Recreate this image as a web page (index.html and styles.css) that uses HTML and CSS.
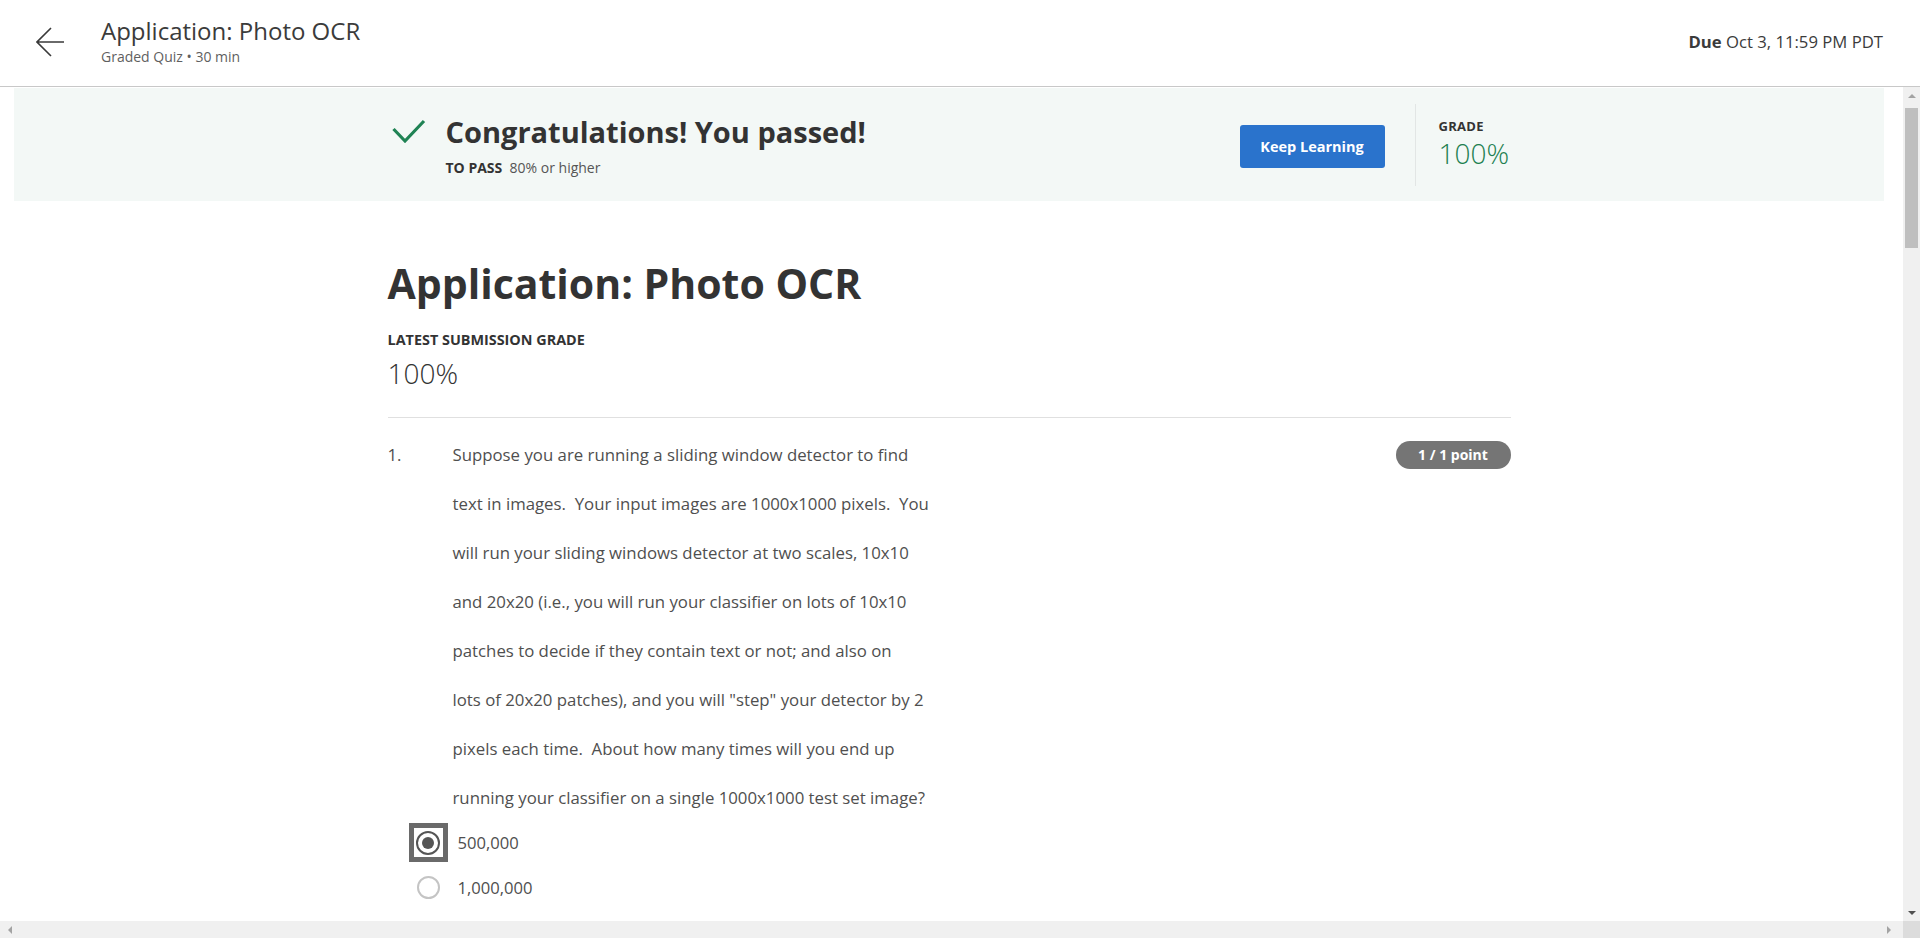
FILE: index.html
```html
<!DOCTYPE html>
<html lang="en">
<head>
<meta charset="utf-8">
<title>Application: Photo OCR</title>
<link rel="stylesheet" href="styles.css">
</head>
<body>
<header class="topbar">
  <a class="back" aria-label="Back">
    <svg width="28" height="30" viewBox="0 0 28 30"><path d="M28 15H1M15 1L1 15L15 29" fill="none" stroke="#3a3a3a" stroke-width="1.6"/></svg>
  </a>
  <div class="titles">
    <div class="t1">Application: Photo OCR</div>
    <div class="t2">Graded Quiz • 30 min</div>
  </div>
  <div class="due"><b>Due</b> Oct 3, 11:59 PM PDT</div>
</header>
<div class="viewport">
  <main class="scroll">
    <div class="page">
      <section class="banner">
        <div class="wrap banner-row">
          <div class="pass">
            <svg class="check" width="34" height="26" viewBox="0 0 34 26"><path d="M1.5 10L13 22L32 2" fill="none" stroke="#1f8354" stroke-width="3.2"/></svg>
            <div class="pass-text">
              <h2 class="congrats">Congratulations! You passed!</h2>
              <div class="topass"><b>TO PASS</b>&nbsp; 80% or higher</div>
            </div>
          </div>
          <button class="btn">Keep Learning</button>
          <div class="vdiv"></div>
          <div class="grade">
            <div class="label">GRADE</div>
            <div class="grade-val">100%</div>
          </div>
        </div>
      </section>
      <div class="wrap content">
        <h1 class="title">Application: Photo OCR</h1>
        <div class="latest">LATEST SUBMISSION GRADE</div>
        <div class="score">100%</div>
        <hr class="divider">
        <div class="question">
          <div class="qnum">1.</div>
          <div class="qtext">
            <div class="line">Suppose you are running a sliding window detector to find</div>
            <div class="line">text in images.  Your input images are 1000x1000 pixels.  You</div>
            <div class="line">will run your sliding windows detector at two scales, 10x10</div>
            <div class="line">and 20x20 (i.e., you will run your classifier on lots of 10x10</div>
            <div class="line">patches to decide if they contain text or not; and also on</div>
            <div class="line">lots of 20x20 patches), and you will "step" your detector by 2</div>
            <div class="line">pixels each time.  About how many times will you end up</div>
            <div class="line">running your classifier on a single 1000x1000 test set image?</div>
          </div>
          <div class="badge">1 / 1 point</div>
        </div>
        <div class="options">
          <div class="opt">
            <span class="focusbox"><span class="radio on"></span></span>
            <span class="opt-label">500,000</span>
          </div>
          <div class="opt">
            <span class="slot"><span class="radio"></span></span>
            <span class="opt-label">1,000,000</span>
          </div>
        </div>
      </div>
    </div>
  </main>
  <div class="vscroll">
    <div class="sbtn"><span class="tri up"></span></div>
    <div class="thumb"></div>
    <div class="sbtn end"><span class="tri down"></span></div>
  </div>
  <div class="hscroll">
    <span class="tri left"></span>
    <span class="tri right"></span>
  </div>
  <div class="corner"></div>
</div>
</body>
</html>
```

FILE: styles.css
```css
* { box-sizing: border-box; }
html, body { margin: 0; padding: 0; }
body {
  font-family: "Open Sans", "Liberation Sans", sans-serif;
  height: 938px;
  overflow: hidden;
  display: flex;
  flex-direction: column;
  background: #fff;
  color: #333;
}

/* top bar */
.topbar {
  height: 87px;
  flex: none;
  border-bottom: 1px solid #c8c8c8;
  display: flex;
  align-items: flex-start;
  padding: 0 37px 0 36px;
}
.back { display: block; margin-top: 27px; width: 28px; height: 30px; }
.back svg { display: block; }
.titles { margin-left: 37px; padding-top: 16px; }
.t1 { font-size: 24px; line-height: 30px; color: #3b3b3b; }
.t2 { font-size: 14px; line-height: 18px; margin-top: 2px; color: #5f5f5f; }
.due { margin-left: auto; padding-top: 31px; font-size: 16.7px; line-height: 22px; color: #3b3b3b; }
.due b { font-weight: 700; }

/* scroll viewport with classic scrollbars */
.viewport {
  flex: 1;
  min-height: 0;
  display: grid;
  grid-template-columns: 1fr 17px;
  grid-template-rows: 1fr 17px;
}
.scroll { overflow: hidden; min-width: 0; min-height: 0; }
.page { padding: 1px 19px 0 14px; }
.wrap { width: 1123px; margin: 0 auto; }

.vscroll { background: #f0f0f0; display: flex; flex-direction: column; }
.sbtn { height: 17px; display: flex; align-items: center; justify-content: center; }
.sbtn.end { margin-top: auto; }
.thumb { margin: 4px 2px 0; height: 140px; background: #bfbfbf; }
.hscroll {
  background: #f0f0f0;
  display: flex;
  align-items: center;
  justify-content: space-between;
  padding: 0 12px 0 8px;
}
.corner { background: #dcdcdc; }
.tri { display: block; width: 0; height: 0; border: 4px solid transparent; }
.tri.up { border-top: 0; border-bottom: 4px solid #a3a3a3; }
.tri.down { border-bottom: 0; border-top: 4px solid #505050; }
.tri.left { border-left: 0; border-right: 4px solid #a3a3a3; }
.tri.right { border-right: 0; border-left: 4px solid #a3a3a3; }

/* banner */
.banner {
  height: 113px;
  background: #f3f8f6;
}
.banner-row { display: flex; align-items: flex-start; height: 113px; }
.pass { display: flex; align-items: flex-start; margin: 26px 0 0 4px; }
.check { display: block; margin-top: 5px; flex: none; }
.pass-text { margin-left: 20px; }
.congrats { margin: 0; font-size: 29px; line-height: 36px; font-weight: 700; color: #333; }
.topass { margin-top: 8px; font-size: 14px; line-height: 19px; color: #555; }
.topass b { color: #333; }
.btn {
  margin: 37px 0 0 auto;
  width: 145px;
  height: 43px;
  border: 0;
  border-radius: 3px;
  background: #2a73cc;
  color: #fff;
  font-family: "Open Sans", "Liberation Sans", sans-serif;
  font-weight: 700;
  font-size: 14.5px;
  padding: 0;
}
.vdiv { margin: 16px 0 0 30px; width: 1px; height: 82px; background: #e2e6e5; }
.grade { margin: 29px 0 0 23px; width: 72px; }
.label { font-size: 13px; line-height: 18px; font-weight: 700; color: #333; letter-spacing: 0.3px; }
.grade-val { font-size: 28px; line-height: 36px; font-weight: 300; color: #1d7f51; }

/* content */
.title { margin: 58px 0 0; font-size: 41px; line-height: 49px; font-weight: 700; color: #333; }
.latest { margin-top: 22px; font-size: 14.4px; line-height: 20px; font-weight: 700; color: #333; }
.score { margin-top: 5px; font-size: 28px; line-height: 36px; font-weight: 300; color: #333; }
.divider { margin: 26px 0 0; border: 0; height: 1px; background: #e0e0e0; }

.question { display: flex; align-items: flex-start; padding-top: 12px; }
.qnum { width: 65px; flex: none; font-size: 16.8px; line-height: 49px; color: #4f4f4f; }
.qtext { font-size: 16.8px; line-height: 49px; color: #4f4f4f; }
.line { white-space: pre; }
.badge {
  margin-left: auto;
  margin-top: 11px;
  width: 115px;
  height: 28px;
  border-radius: 14px;
  background: #757575;
  color: #fff;
  font-size: 14px;
  font-weight: 700;
  line-height: 28px;
  text-align: center;
}

.options { padding-left: 21px; margin-top: -2px; }
.opt { display: flex; align-items: center; height: 45px; }
.focusbox, .slot {
  width: 39px; height: 39px; flex: none;
  display: flex; align-items: center; justify-content: center;
}
.focusbox { border: 5px solid #6a6a6a; }
.radio {
  width: 23px; height: 23px; border-radius: 50%;
  border: 2px solid #c4c4c4;
  display: flex; align-items: center; justify-content: center;
}
.radio.on { width: 24px; height: 24px; border: 2.5px solid #555; }
.radio.on::after { content: ""; width: 12px; height: 12px; border-radius: 50%; background: #555; }
.opt-label { margin-left: 10px; font-size: 16.6px; color: #4f4f4f; }
```
